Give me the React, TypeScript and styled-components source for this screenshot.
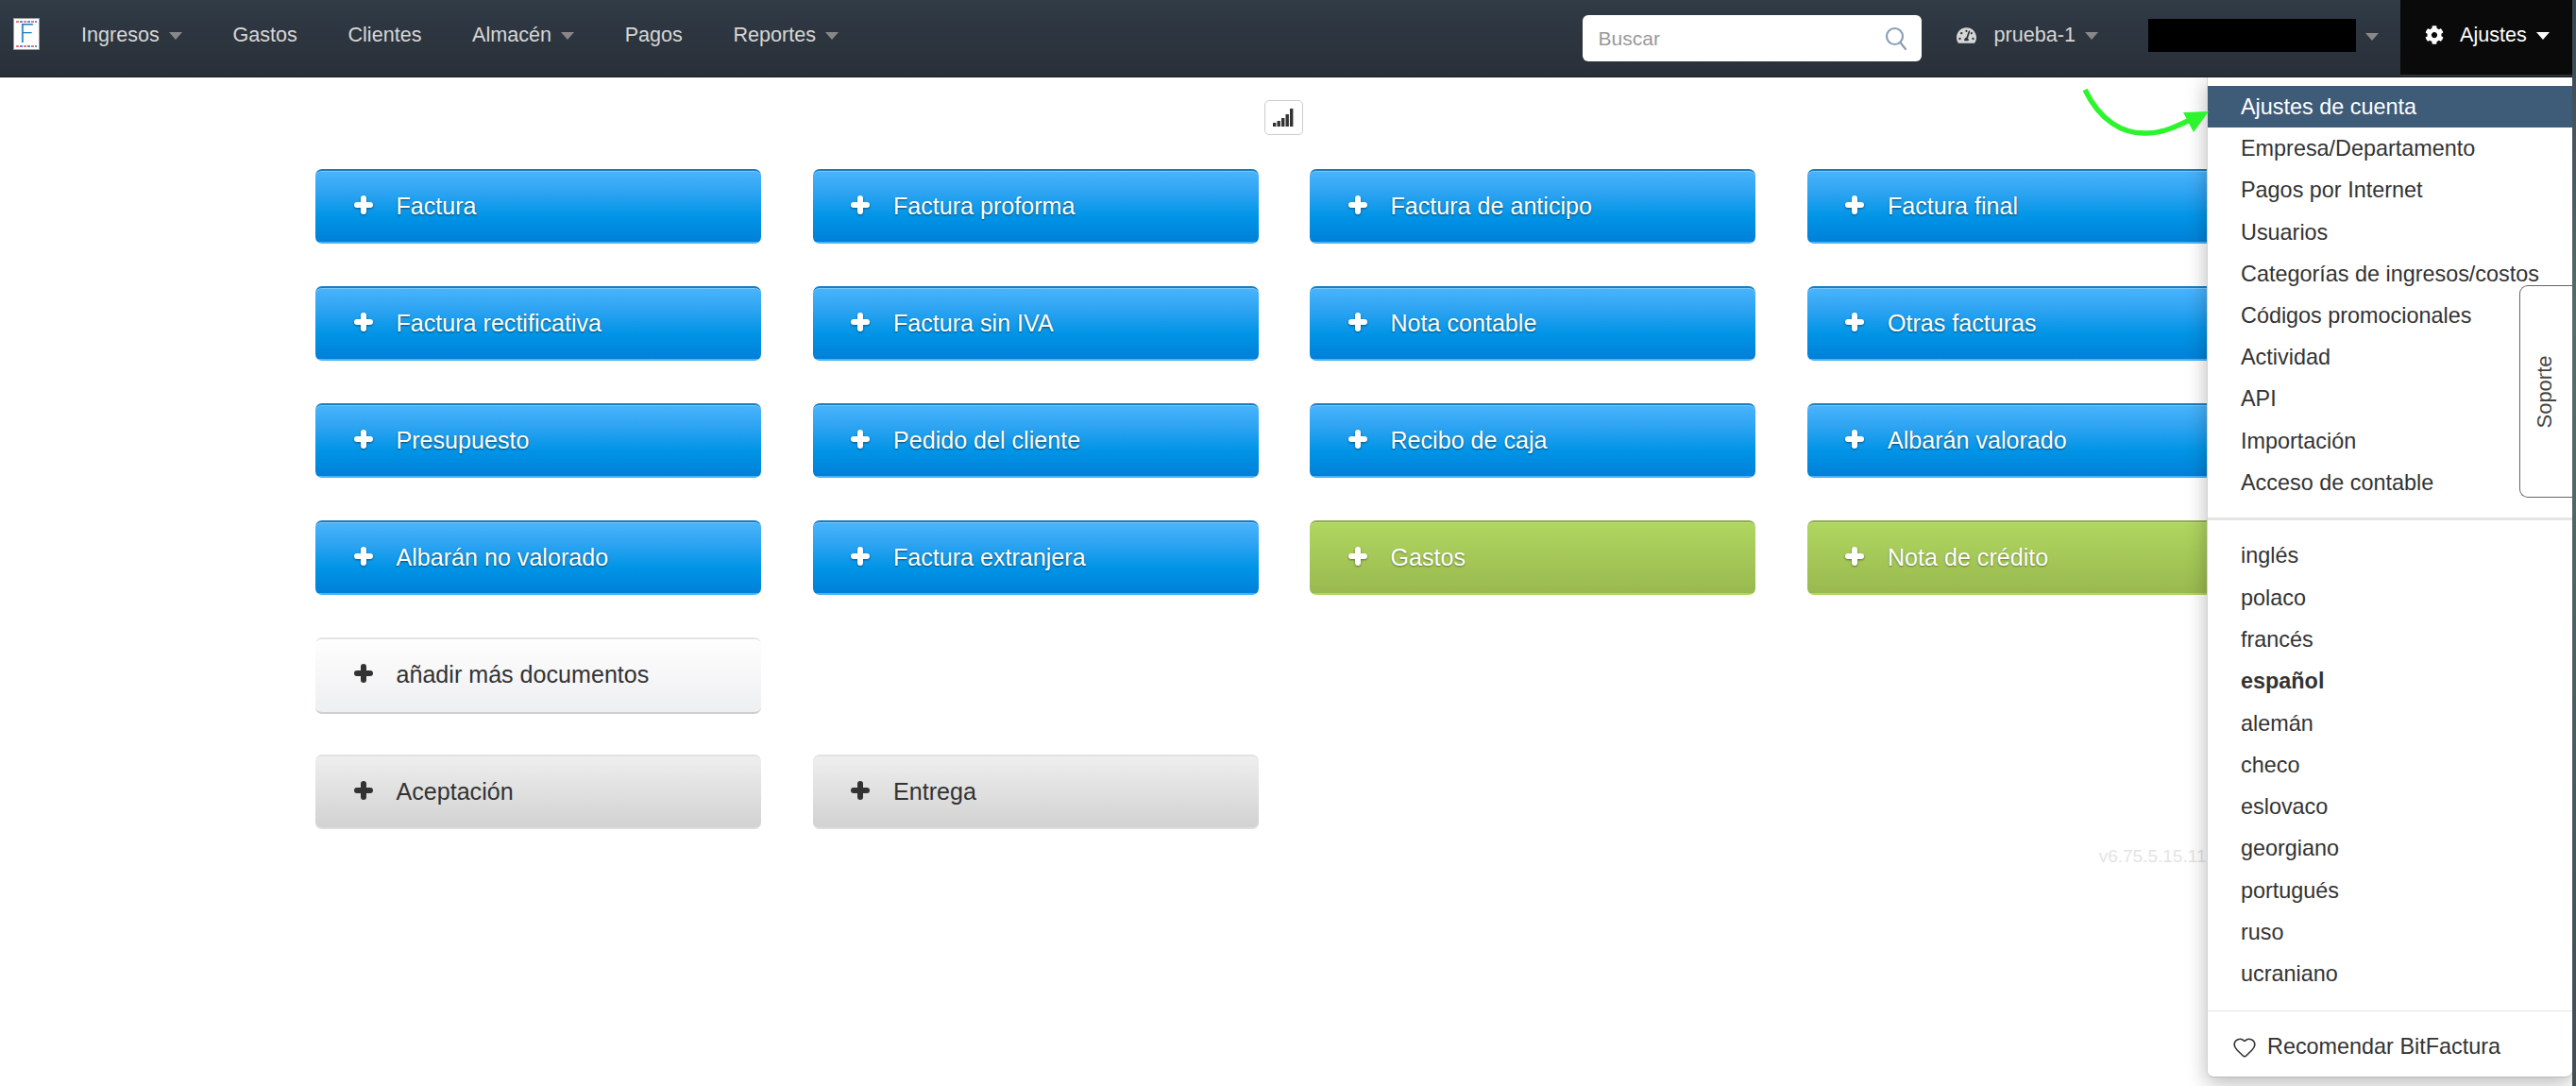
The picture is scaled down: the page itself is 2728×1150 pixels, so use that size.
import styled, { createGlobalStyle } from "styled-components";
import { FaCog, FaTachometerAlt } from "react-icons/fa";
import { Heart } from "lucide-react";

const GlobalStyle = createGlobalStyle`
  html, body {
    margin: 0;
    padding: 0;
    background: #fff;
    font-family: "Liberation Sans", Arial, sans-serif;
  }
  #root {
    height: 1150px;
    overflow: hidden;
    position: relative;
  }
`;

const Navbar = styled.nav`
  position: relative;
  z-index: 1;
  height: 81px;
  display: flex;
  align-items: flex-start;
  padding-left: 14px;
  background: linear-gradient(#303b45, #292f39);
  border-bottom: 1px solid #15191d;
`;

const Logo = styled.div`
  width: 28px;
  height: 34px;
  margin: 19px 44px 0 0;
  flex: none;
  box-sizing: border-box;
  border: 1px solid #999;
  color: #1a7fc0;
  font-family: Roboto, sans-serif;
  font-weight: 300;
  font-size: 27px;
  line-height: 33px;
  text-align: center;
  background:
    repeating-linear-gradient(90deg, #e77 0 3px, #fff 3px 4px, #68c 4px 7px, #fff 7px 8px) 2px 2px / 22px 2px no-repeat,
    repeating-linear-gradient(90deg, #e77 0 3px, #fff 3px 4px, #68c 4px 7px, #fff 7px 8px) 2px 28px / 22px 2px no-repeat,
    #fff;
`;

const NavLink = styled.a`
  display: flex;
  align-items: center;
  height: 74px;
  margin-right: 53.6px;
  color: #d6d6d6;
  font-size: 21.6px;
`;

const Caret = styled.span<{ $color?: string }>`
  width: 0;
  height: 0;
  margin-left: 10px;
  margin-top: 2px;
  border-left: 7px solid transparent;
  border-right: 7px solid transparent;
  border-top: 8px solid ${(p) => p.$color || "#888"};
`;

const RightGroup = styled.div`
  margin-left: auto;
  display: flex;
  align-items: flex-start;
  padding-right: 4px;
`;

const SearchBox = styled.div`
  width: 359px;
  height: 49px;
  margin: 16px 37px 0 0;
  padding: 0 15px 0 17px;
  box-sizing: border-box;
  display: flex;
  align-items: center;
  justify-content: space-between;
  background: #fff;
  border-radius: 6px;
  color: #999;
  font-size: 21px;
`;

const AccountLink = styled(NavLink)`
  margin-right: 53px;
  svg {
    margin-right: 19px;
    font-size: 21px;
  }
`;

const Redacted = styled.div`
  width: 220px;
  height: 35px;
  background: #000;
`;

const UserLink = styled.div`
  display: flex;
  align-items: center;
  height: 35px;
  margin: 20px 23px 0 0;
`;

const SettingsTab = styled.div`
  width: 182px;
  height: 79px;
  background: #0a0a0a;
  color: #fff;
  font-size: 21.6px;
  display: flex;
  align-items: center;
  padding: 0 0 5px 26px;
  box-sizing: border-box;
  svg {
    font-size: 20px;
    margin-right: 17px;
  }
`;

const Main = styled.main`
  width: 2050px;
  margin-left: 334px;
`;

const SignalRow = styled.div`
  display: flex;
  justify-content: center;
  padding-top: 24px;
`;

const SignalButton = styled.div`
  width: 41px;
  height: 37px;
  box-sizing: border-box;
  border: 1px solid #ccc;
  border-radius: 5px;
  display: flex;
  align-items: center;
  justify-content: center;
`;

const Grid = styled.div`
  margin-top: 36px;
  display: grid;
  grid-template-columns: repeat(4, 472px);
  column-gap: 54.5px;
  row-gap: 45px;
`;

const variants = {
  blue: {
    bg: "linear-gradient(#4ab4fc 0%, #2ea4f2 30%, #0094e6 65%, #0080d8 100%)",
    border: "#1b7dbd",
    inset: "rgba(255,255,255,.25)",
    color: "#fff",
    shadow: "0 1px 2px rgba(0,0,0,.55)",
    bottom: "transparent",
  },
  green: {
    bg: "linear-gradient(#b0d760, #99b94f)",
    border: "#8fae52",
    inset: "rgba(255,255,255,.2)",
    color: "#fff",
    shadow: "0 1px 2px rgba(0,0,0,.4)",
    bottom: "transparent",
  },
  white: {
    bg: "linear-gradient(#fefefe, #eeeff1)",
    border: "#e4e4e4",
    inset: "transparent",
    color: "#333",
    shadow: "none",
    bottom: "#cfcfcf",
  },
  gray: {
    bg: "linear-gradient(#eeeeee, #d2d2d2)",
    border: "#e2e2e2",
    inset: "transparent",
    color: "#333",
    shadow: "none",
    bottom: "#dcdcdc",
  },
};

type Variant = keyof typeof variants;

const DocButton = styled.a<{ $variant: Variant }>`
  height: ${(p) => (p.$variant === "white" ? 81 : 79)}px;
  margin-bottom: ${(p) => (p.$variant === "white" ? -2 : 0)}px;
  box-sizing: border-box;
  display: flex;
  align-items: center;
  gap: 25px;
  padding: 0 0 ${(p) => (p.$variant === "white" ? 2 : 0)}px 40.5px;
  border-radius: 7px;
  font-size: 25.1px;
  background: ${(p) => variants[p.$variant].bg};
  color: ${(p) => variants[p.$variant].color};
  text-shadow: ${(p) => variants[p.$variant].shadow};
  border-top: 2px solid ${(p) => variants[p.$variant].border};
  border-bottom: 2px solid ${(p) => variants[p.$variant].bottom};
  box-shadow: inset 0 1px 0 ${(p) => variants[p.$variant].inset};
  svg {
    flex: none;
    margin-bottom: 4px;
    filter: ${(p) => (p.$variant === "blue" || p.$variant === "green" ? "drop-shadow(0 1px 1px rgba(0,0,0,.45))" : "none")};
  }
`;

const Spacer = styled.div`
  grid-column: span 3;
`;

const Version = styled.div`
  margin-top: 18px;
  text-align: right;
  color: #e4e4e4;
  font-size: 19px;
`;

const Dropdown = styled.div`
  position: absolute;
  top: 82px;
  left: 2337px;
  width: 387px;
  height: 1059px;
  box-sizing: border-box;
  padding-top: 9px;
  background: #fff;
  border-left: 1px solid #d4d4d4;
  border-bottom: 1px solid #bbb;
  border-radius: 0 0 7px 7px;
  box-shadow: 0 6px 22px rgba(0, 0, 0, 0.28);
  color: #333;
  font-size: 23.4px;
`;

const MenuItem = styled.a<{ $active?: boolean; $bold?: boolean }>`
  display: block;
  height: 44.3px;
  line-height: 44.3px;
  padding-left: 35px;
  font-weight: ${(p) => (p.$bold ? 700 : 400)};
  background: ${(p) => (p.$active ? "#3e5b78" : "transparent")};
  color: ${(p) => (p.$active ? "#fff" : "#333")};
`;

const SettingsItem = styled(MenuItem)`
  height: 44.2px;
  line-height: 44px;
`;

const Divider = styled.div<{ $size: number }>`
  height: ${(p) => p.$size}px;
  background: #e5e5e5;
`;

const TopGroup = styled.div`
  padding-bottom: 15px;
`;

const LangGroup = styled.div`
  padding: 15.5px 0 16.5px;
`;

const Recommend = styled.a`
  display: flex;
  align-items: center;
  gap: 11px;
  padding: 24px 0 0 26px;
`;

const SupportTab = styled.div`
  position: absolute;
  top: 302px;
  left: 2668px;
  width: 56px;
  height: 225px;
  box-sizing: border-box;
  padding-right: 3px;
  background: #fff;
  border: 1px solid #666;
  border-right: none;
  border-radius: 9px 0 0 9px;
  display: flex;
  align-items: center;
  justify-content: center;
  color: #444;
  font-size: 22px;
  span {
    transform: rotate(-90deg);
  }
`;

const EdgeStrip = styled.div`
  position: absolute;
  z-index: 2;
  top: 0;
  right: 0;
  bottom: 0;
  width: 4px;
  background: linear-gradient(#394650, #586c6d 30%, #3f4f55);
`;

const Arrow = styled.svg`
  position: absolute;
  top: 90px;
  left: 2200px;
`;

const mainDocs: { label: string; variant: Variant }[] = [
  { label: "Factura", variant: "blue" },
  { label: "Factura proforma", variant: "blue" },
  { label: "Factura de anticipo", variant: "blue" },
  { label: "Factura final", variant: "blue" },
  { label: "Factura rectificativa", variant: "blue" },
  { label: "Factura sin IVA", variant: "blue" },
  { label: "Nota contable", variant: "blue" },
  { label: "Otras facturas", variant: "blue" },
  { label: "Presupuesto", variant: "blue" },
  { label: "Pedido del cliente", variant: "blue" },
  { label: "Recibo de caja", variant: "blue" },
  { label: "Albarán valorado", variant: "blue" },
  { label: "Albarán no valorado", variant: "blue" },
  { label: "Factura extranjera", variant: "blue" },
  { label: "Gastos", variant: "green" },
  { label: "Nota de crédito", variant: "green" },
];

const settingsItems = [
  "Empresa/Departamento",
  "Pagos por Internet",
  "Usuarios",
  "Categorías de ingresos/costos",
  "Códigos promocionales",
  "Actividad",
  "API",
  "Importación",
  "Acceso de contable",
];

const languages = [
  "inglés",
  "polaco",
  "francés",
  "español",
  "alemán",
  "checo",
  "eslovaco",
  "georgiano",
  "portugués",
  "ruso",
  "ucraniano",
];

const PlusIcon = ({ color }: { color: string }) => (
  <svg width="20" height="20" viewBox="0 0 20 20" fill="none" stroke={color} strokeWidth="6" strokeLinecap="round">
    <path d="M10 3 V17 M3 10 H17" />
  </svg>
);

const Doc = ({ label, variant }: { label: string; variant: Variant }) => (
  <DocButton $variant={variant}>
    <PlusIcon color={variants[variant].color} />
    {label}
  </DocButton>
);

const SearchIcon = () => (
  <svg width="24" height="26" viewBox="0 0 24 26" fill="none" stroke="#8aa0b8" strokeWidth="2.2">
    <circle cx="10.5" cy="10.5" r="8.5" />
    <path d="M16.5 17 L22 24" strokeLinecap="round" />
  </svg>
);

const SignalIcon = () => (
  <svg width="22" height="19" viewBox="0 0 22 19" fill="#333">
    <rect x="0" y="15" width="3.4" height="4" />
    <rect x="4.5" y="13" width="3.4" height="6" />
    <rect x="9" y="10" width="3.4" height="9" />
    <rect x="13.5" y="6" width="3.4" height="13" />
    <rect x="18" y="0" width="3.4" height="19" />
  </svg>
);

export default function App() {
  return (
    <>
      <GlobalStyle />
      <Navbar>
        <Logo>F</Logo>
        <NavLink>Ingresos<Caret /></NavLink>
        <NavLink>Gastos</NavLink>
        <NavLink>Clientes</NavLink>
        <NavLink>Almacén<Caret /></NavLink>
        <NavLink>Pagos</NavLink>
        <NavLink>Reportes<Caret /></NavLink>
        <RightGroup>
          <SearchBox>
            Buscar
            <SearchIcon />
          </SearchBox>
          <AccountLink>
            <FaTachometerAlt />
            prueba-1
            <Caret />
          </AccountLink>
          <UserLink>
            <Redacted />
            <Caret />
          </UserLink>
          <SettingsTab>
            <FaCog />
            Ajustes
            <Caret $color="#fff" />
          </SettingsTab>
        </RightGroup>
      </Navbar>
      <Main>
        <SignalRow>
          <SignalButton>
            <SignalIcon />
          </SignalButton>
        </SignalRow>
        <Grid>
          {mainDocs.map((d) => (
            <Doc key={d.label} label={d.label} variant={d.variant} />
          ))}
          <Doc label="añadir más documentos" variant="white" />
          <Spacer />
          <Doc label="Aceptación" variant="gray" />
          <Doc label="Entrega" variant="gray" />
        </Grid>
        <Version>v6.75.5.15.11.2024</Version>
      </Main>
      <Dropdown>
        <TopGroup>
          <SettingsItem $active>Ajustes de cuenta</SettingsItem>
          {settingsItems.map((s) => (
            <SettingsItem key={s}>{s}</SettingsItem>
          ))}
        </TopGroup>
        <Divider $size={3} />
        <LangGroup>
          {languages.map((l) => (
            <MenuItem key={l} $bold={l === "español"}>{l}</MenuItem>
          ))}
        </LangGroup>
        <Divider $size={1} />
        <Recommend>
          <Heart size={26} strokeWidth={1.5} />
          Recomendar BitFactura
        </Recommend>
      </Dropdown>
      <Arrow width="145" height="60" viewBox="0 0 145 60">
        <path d="M8 5 C 24 38, 48 52, 73 51 C 90 51, 105 44, 121 36" fill="none" stroke="#2df52d" strokeWidth="5.5" />
        <path d="M139 28 L 112 29 L 123 50 Z" fill="#2df52d" />
      </Arrow>
      <SupportTab>
        <span>Soporte</span>
      </SupportTab>
      <EdgeStrip />
    </>
  );
}
